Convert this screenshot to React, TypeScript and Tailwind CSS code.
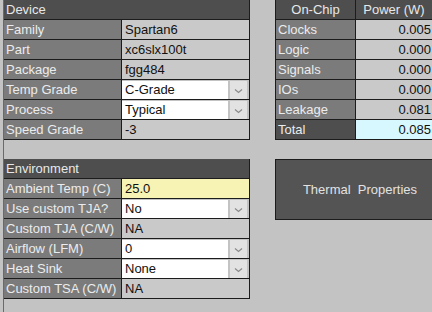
import React from 'react';

const font = { fontFamily: '"Liberation Sans", Arial, sans-serif' };

type Row = { label: string; value: string; kind?: 'text' | 'select' | 'input' };

const device: Row[] = [
  { label: 'Family', value: 'Spartan6' },
  { label: 'Part', value: 'xc6slx100t' },
  { label: 'Package', value: 'fgg484' },
  { label: 'Temp Grade', value: 'C-Grade', kind: 'select' },
  { label: 'Process', value: 'Typical', kind: 'select' },
  { label: 'Speed Grade', value: '-3' },
];

const environment: Row[] = [
  { label: 'Ambient Temp (C)', value: '25.0', kind: 'input' },
  { label: 'Use custom TJA?', value: 'No', kind: 'select' },
  { label: 'Custom TJA (C/W)', value: 'NA' },
  { label: 'Airflow (LFM)', value: '0', kind: 'select' },
  { label: 'Heat Sink', value: 'None', kind: 'select' },
  { label: 'Custom TSA (C/W)', value: 'NA' },
];

const power = [
  { label: 'Clocks', value: '0.005' },
  { label: 'Logic', value: '0.000' },
  { label: 'Signals', value: '0.000' },
  { label: 'IOs', value: '0.000' },
  { label: 'Leakage', value: '0.081' },
];

const Chevron = () => (
  <svg width="9" height="6" viewBox="0 0 9 6" className="block">
    <path d="M1 1.5 L4.5 4.5 L8 1.5" fill="none" stroke="#8a8a8a" strokeWidth="1.2" />
  </svg>
);

const ValueCell: React.FC<{ row: Row }> = ({ row }) => {
  if (row.kind === 'select') {
    return (
      <div className="flex flex-1 items-center pr-[2px]">
        <div className="flex h-[18px] flex-1 items-center bg-white pl-[3px] text-[#111]">{row.value}</div>
        <div className="ml-[2px] flex h-[18px] w-[17px] items-center justify-center bg-[#e2e2e2] pt-[3px]">
          <Chevron />
        </div>
      </div>
    );
  }
  if (row.kind === 'input') {
    return <div className="flex flex-1 items-center bg-[#f6f3b4] pl-[3px] text-[#111]">{row.value}</div>;
  }
  return <div className="flex flex-1 items-center bg-[#c9c9c9] pl-[3px] text-[#111]">{row.value}</div>;
};

const PropTable: React.FC<{ title: string; rows: Row[] }> = ({ title, rows }) => (
  <div className="w-[246px] border-r border-[#1c1c1c]">
    <div className="flex h-[20px] items-center border-b border-[#1c1c1c] bg-[#4e4e4e] pl-[2px] text-[#e8e8e8]">
      {title}
    </div>
    {rows.map((r) => (
      <div key={r.label} className="flex h-[20px] border-b border-[#1c1c1c]">
        <div className="flex w-[118px] items-center border-r border-[#1c1c1c] bg-[#7b7b7b] pl-[2px] text-[#ececec] whitespace-nowrap">
          {r.label}
        </div>
        <ValueCell row={r} />
      </div>
    ))}
  </div>
);

const App: React.FC = () => {
  return (
    <div className="h-[312px] w-[432px] overflow-hidden bg-[#c3c3c3] pl-[3px] text-[13px] leading-none" style={font}>
      <div className="flex h-full border-l border-[#6a6a6a]">
        {/* Left column */}
        <div className="flex flex-col gap-[19px]">
          <PropTable title="Device" rows={device} />
          <PropTable title="Environment" rows={environment} />
        </div>

        {/* Right column */}
        <div className="ml-[25px] flex flex-col gap-[19px]">
          <div className="w-[170px] border-l border-[#1c1c1c]">
            <div className="flex h-[20px] border-b border-[#1c1c1c] bg-[#4e4e4e] text-[#e8e8e8]">
              <div className="flex w-[80px] items-center justify-center border-r border-[#1c1c1c]">On-Chip</div>
              <div className="flex w-[76px] items-center justify-center">Power (W)</div>
            </div>
            {power.map((p) => (
              <div key={p.label} className="flex h-[20px] border-b border-[#1c1c1c]">
                <div className="flex w-[80px] items-center border-r border-[#1c1c1c] bg-[#7b7b7b] pl-[2px] text-[#ececec]">
                  {p.label}
                </div>
                <div className="flex w-[76px] items-center justify-end bg-[#c9c9c9] pr-[1px] text-[#111]">{p.value}</div>
              </div>
            ))}
            <div className="flex h-[20px] border-b border-[#1c1c1c]">
              <div className="flex w-[80px] items-center border-r border-[#1c1c1c] bg-[#4e4e4e] pl-[2px] text-[#ececec]">
                Total
              </div>
              <div className="flex w-[76px] items-center justify-end bg-[#d8f8ff] pr-[1px] text-[#111]">0.085</div>
            </div>
          </div>

          <div className="flex h-[61px] w-[170px] items-center justify-center border border-[#1c1c1c] bg-[#545454] text-[#e2e2e2] whitespace-pre">
            {'Thermal  Properties'}
          </div>
        </div>
      </div>
    </div>
  );
};

export default App;
